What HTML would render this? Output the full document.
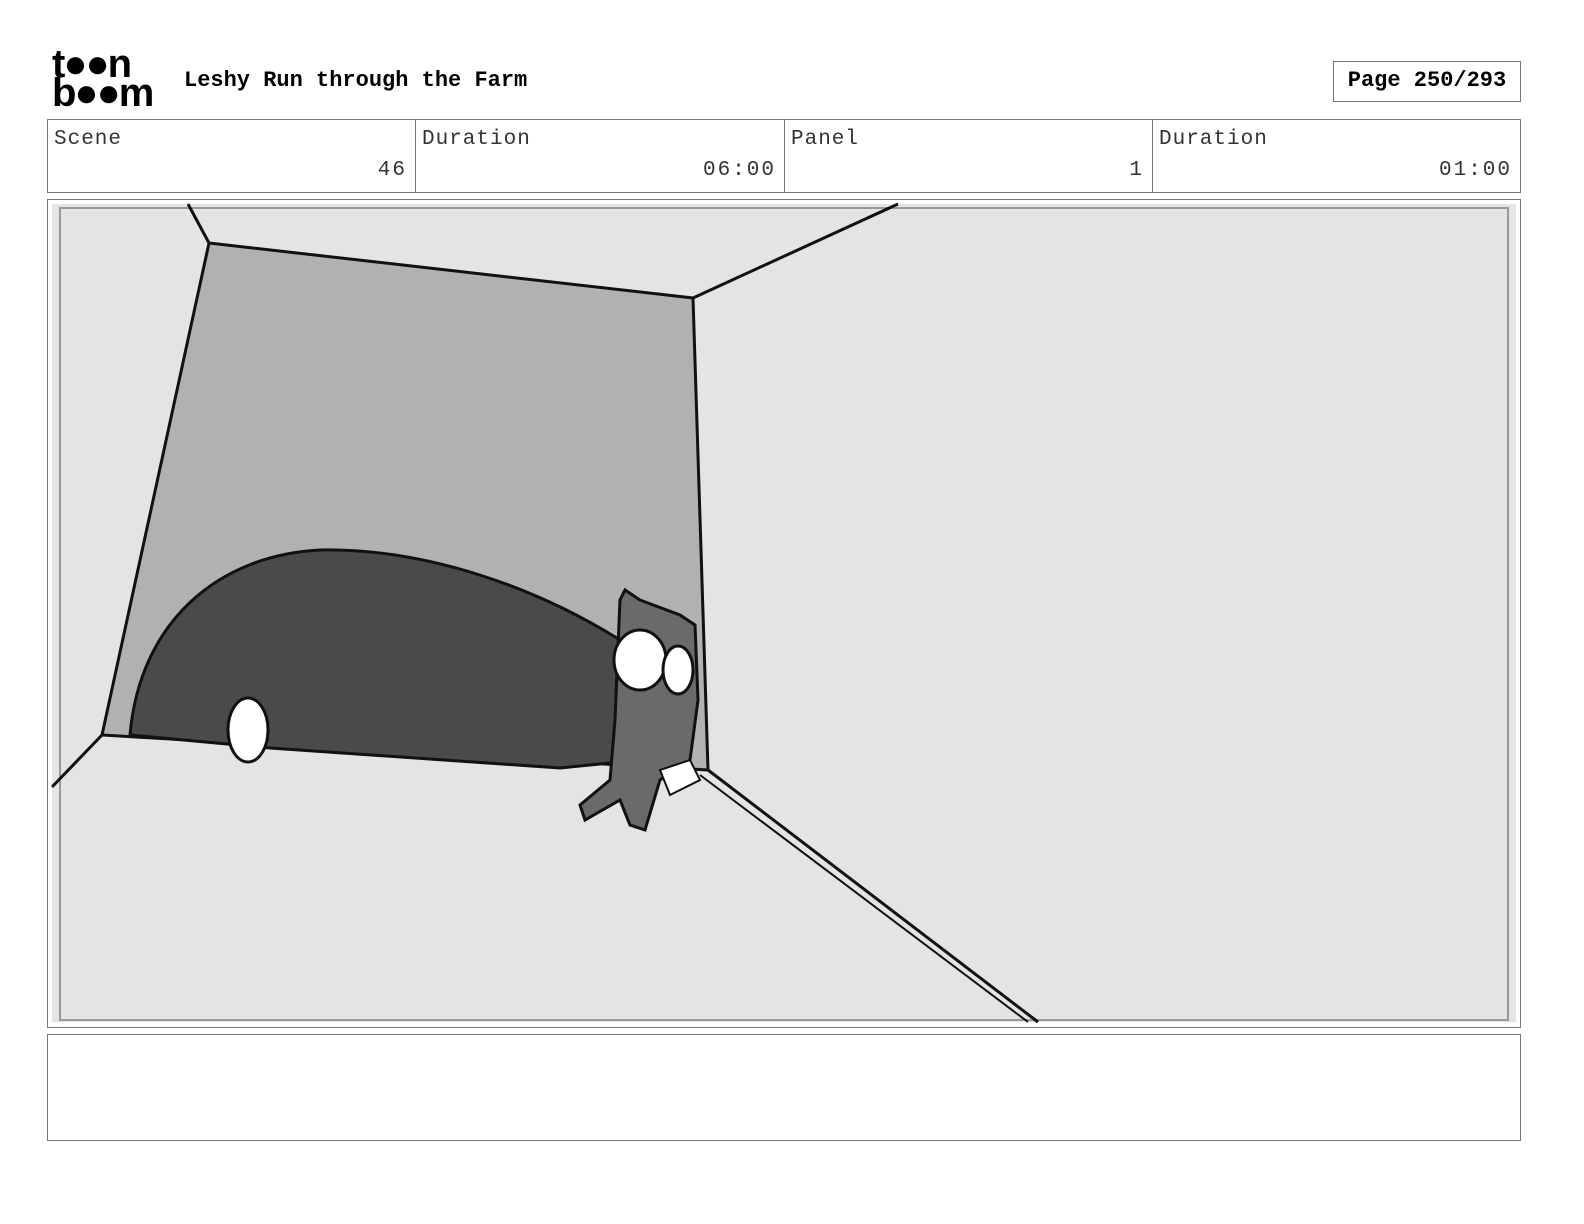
<!DOCTYPE html>
<html><head><style>
html,body{margin:0;padding:0;overflow:hidden}
body{background:#fff;width:1584px;height:1224px;position:relative;font-family:"Liberation Mono",monospace;}
.a{position:absolute}
.cell{position:absolute;top:119px;height:74px;border:1px solid #777;box-sizing:border-box;font-size:21px;color:#333}
.cell .l{position:absolute;left:6px;top:8px;letter-spacing:1px}
.cell .v{position:absolute;right:8px;top:39px;letter-spacing:2px}
</style></head><body>
<div class="a" style="left:52px;top:50px;font-family:'Liberation Sans',sans-serif;font-weight:bold;font-size:40px;line-height:29px;letter-spacing:-2px">t●●n<br>b●●m</div>
<div class="a" style="left:184px;top:68px;font-size:22px;font-weight:bold">Leshy Run through the Farm</div>
<div class="a" style="left:1333px;top:61px;width:188px;height:41px;border:1px solid #777;box-sizing:border-box;font-size:22px;font-weight:bold;text-align:center;line-height:38px">Page 250/293</div>
<div class="cell" style="left:47px;width:369px"><span class="l">Scene</span><span class="v">46</span></div>
<div class="cell" style="left:415px;width:370px"><span class="l">Duration</span><span class="v">06:00</span></div>
<div class="cell" style="left:784px;width:369px"><span class="l">Panel</span><span class="v">1</span></div>
<div class="cell" style="left:1152px;width:369px"><span class="l">Duration</span><span class="v">01:00</span></div>
<div class="a" style="left:47px;top:199px;width:1474px;height:829px;border:1px solid #777;box-sizing:border-box"></div>
<svg class="a" style="left:0;top:0" width="1584" height="1224">
<rect x="52" y="204" width="1464" height="818" fill="#e4e4e4"/>
<rect x="60" y="208" width="1448" height="812" fill="none" stroke="#999" stroke-width="2"/>
<polygon points="209,243 693,298 708,770 102,735" fill="#b1b1b1" stroke="#111" stroke-width="3"/>
<g stroke="#111" stroke-width="3" fill="none">
<line x1="188" y1="204" x2="209" y2="243"/><line x1="693" y1="298" x2="898" y2="204"/>
<line x1="102" y1="735" x2="52" y2="787"/><line x1="708" y1="770" x2="1038" y2="1022"/>
<line x1="700" y1="775" x2="1028" y2="1022" stroke-width="2"/>
</g>
<path d="M130,735 C140,620 220,555 320,550 C430,548 540,590 620,640 L640,760 L560,768 L270,748 L130,735Z" fill="#4a4a4a" stroke="#111" stroke-width="3"/>
<ellipse cx="248" cy="730" rx="20" ry="32" fill="#fff" stroke="#111" stroke-width="3"/>
<path d="M620,600 L625,590 L640,600 L680,615 L695,625 L698,700 L690,760 L660,780 L645,830 L630,825 L620,800 L585,820 L580,805 L610,780 L615,720 Z" fill="#6a6a6a" stroke="#111" stroke-width="3"/>
<ellipse cx="640" cy="660" rx="26" ry="30" fill="#fff" stroke="#111" stroke-width="3"/>
<ellipse cx="678" cy="670" rx="15" ry="24" fill="#fff" stroke="#111" stroke-width="3"/>
<path d="M660,770 L690,760 L700,780 L670,795 Z" fill="#fff" stroke="#111" stroke-width="2"/>
</svg>
<div class="a" style="left:47px;top:1034px;width:1474px;height:107px;border:1px solid #777;box-sizing:border-box"></div>
</body></html>
